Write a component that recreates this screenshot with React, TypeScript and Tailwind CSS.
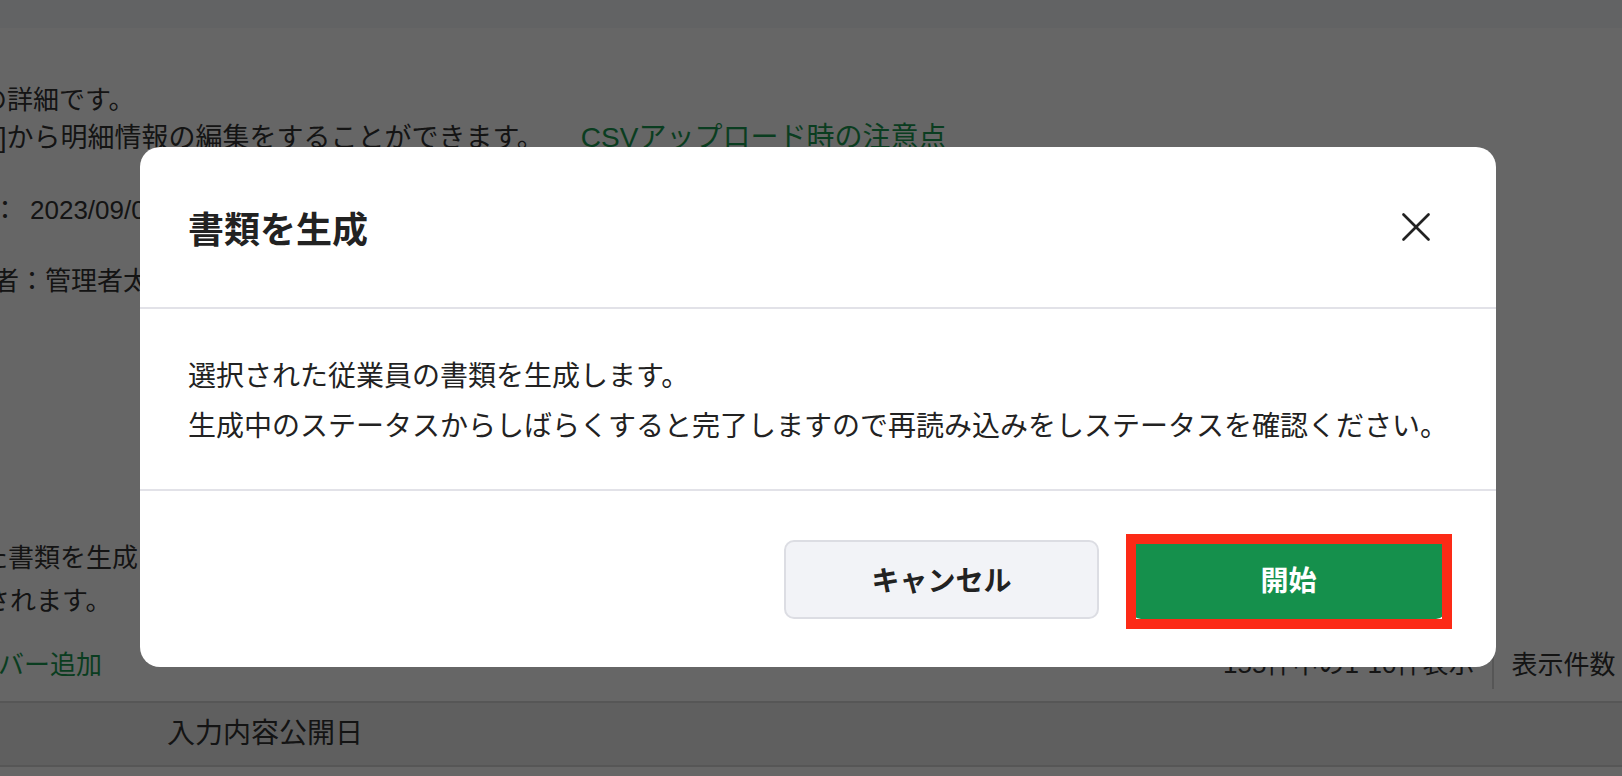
import React from "react";

const XIcon = () => (
  <svg width="28" height="28" viewBox="0 0 28 28" fill="none" stroke="#222" strokeWidth="2.6" strokeLinecap="round">
    <line x1="1.5" y1="1.5" x2="26.5" y2="26.5" />
    <line x1="26.5" y1="1.5" x2="1.5" y2="26.5" />
  </svg>
);

export default function App() {
  return (
    <div className="relative h-[776px] w-[1622px] overflow-hidden bg-white font-['Liberation_Sans','Noto_Sans_CJK_JP',sans-serif] text-[#333]">
      {/* page behind the dialog */}
      <div className="h-[28px] bg-[#f6f7fa]" />
      <div className="flex flex-col text-[26px] leading-[38px] whitespace-nowrap">
        <div className="mt-[53px] -ml-[19px]">の詳細です。</div>
        <div className="-ml-[1px] text-[27px]">
          ]から明細情報の編集をすることができます。
          <span className="ml-[37px] text-[28px] text-[#1a9a50]">CSVアップロード時の注意点</span>
        </div>
        <div className="mt-[34px] -ml-[8px]">
          ：<span className="ml-[12px]">2023/09/01 10:00</span>
        </div>
        <div className="mt-[33px] -ml-[7px]">者：管理者太郎</div>
        <div className="mt-[239px] -ml-[18px]">た書類を生成してください。</div>
        <div className="mt-[5px] -ml-[16px]">されます。</div>
        <div className="mt-[20px] flex w-full items-center">
          <div className="-ml-[54px] flex-1 text-[#1a9a50]">メンバー追加</div>
          <div className="flex w-[399px] shrink-0 items-center">
            <span className="w-[291px] border-r-2 border-[#d8d8d8] pr-[18px] text-right leading-[49px]">155件中の1-10件表示</span>
            <span className="pl-[17px]">表示件数：10件</span>
          </div>
        </div>
        <div className="mt-[12px] flex h-[66px] items-center border-y-2 border-[#d8d8d8] bg-[#eeeeee] pl-[167px] text-[28px]">
          入力内容公開日
        </div>
        <div className="h-[40px]" />
      </div>

      {/* dialog */}
      <div className="absolute inset-0 bg-black/60 pl-[140px] pt-[147px]">
        <div className="w-[1356px] rounded-[20px] bg-white text-[#222]">
          <div className="flex h-[160px] items-center justify-between pl-12 pr-[66px]">
            <h2 className="font-['Noto_Sans_CJK_JP',sans-serif] text-[36px] font-bold">書類を生成</h2>
            <button className="flex h-[28px] w-[28px] items-center justify-center">
              <XIcon />
            </button>
          </div>
          <div className="h-[2px] bg-[#e2e2e8]" />
          <div className="flex h-[180px] flex-col justify-center px-12 font-['Noto_Sans_CJK_JP',sans-serif] text-[28px] leading-[50px]">
            <p>選択された従業員の書類を生成します。</p>
            <p>生成中のステータスからしばらくすると完了しますので再読み込みをしステータスを確認ください。</p>
          </div>
          <div className="h-[2px] bg-[#e2e2e8]" />
          <div className="flex h-[176px] items-center justify-end gap-8 pr-[50px] font-['Noto_Sans_CJK_JP',sans-serif]">
            <button className="h-[79px] w-[315px] rounded-[10px] border-2 border-[#dcdde3] bg-[#f2f3f7] text-[28px] font-bold text-[#222]">
              キャンセル
            </button>
            <button className="relative h-[79px] w-[315px] rounded-[10px] bg-[#15904c] text-[28px] font-bold text-white">
              開始
              <span className="pointer-events-none absolute -bottom-[10px] -left-[5px] -right-[6px] -top-[6px] border-[10px] border-[#fc2a16]" />
            </button>
          </div>
        </div>
      </div>
    </div>
  );
}
